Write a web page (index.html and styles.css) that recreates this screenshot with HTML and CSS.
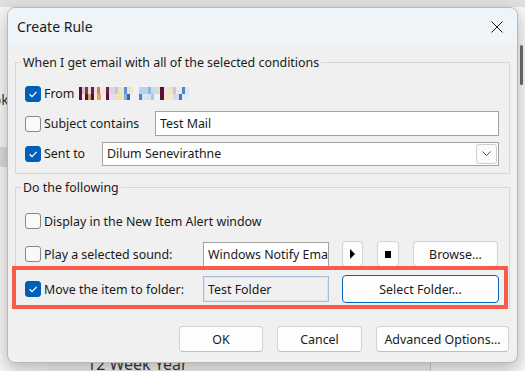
FILE: index.html
```html
<!DOCTYPE html>
<html lang="en">
<head>
    <meta charset="UTF-8">
    <meta name="viewport" content="width=device-width, initial-scale=1.0">
    <title>Create Rule</title>
    <link rel="stylesheet" href="styles.css">
</head>
<body>

    <div class="desktop">
        <div class="topbar"></div>
        <div class="workspace">
            <div class="nav">
                <div class="nav-item">Outlook</div>
                <div class="nav-item selected"></div>
            </div>
            <div class="list">
                <div class="list-item">12 Week Year</div>
            </div>
            <div class="reading">
                <div class="scroll-mark"></div>
            </div>
        </div>

        <div class="dialog">
            <div class="titlebar">
                <span class="title">Create Rule</span>
                <svg class="close" viewBox="0 0 12 12">
                    <path d="M0.5 0.5 L11.5 11.5 M11.5 0.5 L0.5 11.5" />
                </svg>
            </div>

            <div class="dialog-body">
                <fieldset class="group group-conditions">
                    <legend>When I get email with all of the selected conditions</legend>

                    <div class="row">
                        <label class="check">
                            <span class="box on"><svg viewBox="0 0 10 10"><path d="M2.2 5.2 L4.2 7.2 L8 3.2" /></svg></span>
                            From
                        </label>
                        <span class="blur"></span>
                    </div>

                    <div class="row">
                        <label class="check check-subject">
                            <span class="box"></span>
                            Subject contains
                        </label>
                        <div class="field field-grow">Test Mail</div>
                    </div>

                    <div class="row">
                        <label class="check check-sent">
                            <span class="box on"><svg viewBox="0 0 10 10"><path d="M2.2 5.2 L4.2 7.2 L8 3.2" /></svg></span>
                            Sent to
                        </label>
                        <div class="field field-grow combo">
                            <span>Dilum Senevirathne</span>
                            <span class="drop"><svg viewBox="0 0 9 5"><path d="M0.5 0.5 L4.5 4.5 L8.5 0.5" /></svg></span>
                        </div>
                    </div>
                </fieldset>

                <fieldset class="group group-actions">
                    <legend>Do the following</legend>

                    <div class="row">
                        <label class="check">
                            <span class="box"></span>
                            Display in the New Item Alert window
                        </label>
                    </div>

                    <div class="row">
                        <label class="check check-wide">
                            <span class="box"></span>
                            Play a selected sound:
                        </label>
                        <div class="field field-short">Windows Notify Email</div>
                        <button class="btn btn-play"><span class="tri"></span></button>
                        <button class="btn btn-stop"><span class="sq"></span></button>
                        <button class="btn btn-browse">Browse...</button>
                    </div>

                    <div class="row row-move">
                        <label class="check check-wide">
                            <span class="box on"><svg viewBox="0 0 10 10"><path d="M2.2 5.2 L4.2 7.2 L8 3.2" /></svg></span>
                            Move the item to folder:
                        </label>
                        <div class="field field-short field-folder">Test Folder</div>
                        <button class="btn btn-primary">Select Folder...</button>
                    </div>
                </fieldset>

                <div class="footer">
                    <button class="btn btn-ok">OK</button>
                    <button class="btn btn-cancel">Cancel</button>
                    <button class="btn btn-advanced">Advanced Options...</button>
                </div>
            </div>

            <div class="highlight"></div>
        </div>
    </div>

</body>
</html>
```

FILE: styles.css
```css
* {
    box-sizing: border-box;
}

body {
    margin: 0;
    width: 525px;
    height: 371px;
    overflow: hidden;
    font-family: 'Noto Sans', 'Segoe UI', sans-serif;
    color: #1a1a1a;
    background: #e9e9e9;
}

.desktop {
    position: relative;
    width: 525px;
    height: 371px;
    display: flex;
    flex-direction: column;
}

.topbar {
    height: 7px;
    background: #e1e1e1;
}

.workspace {
    flex: 1;
    display: flex;
}

.nav {
    width: 47px;
    background: #f7f7f7;
    padding-top: 84px;
    display: flex;
    flex-direction: column;
}

.nav-item {
    font-size: 14px;
    line-height: 18px;
    margin-left: -44px;
    color: #333;
}

.nav-item.selected {
    margin: 38px 0 0;
    height: 20px;
    background: #dadada;
}

.list {
    flex: 1;
    background: #f3f3f3;
    display: flex;
    flex-direction: column;
    justify-content: flex-end;
}

.list-item {
    font-size: 16px;
    line-height: 18px;
    padding-left: 40px;
    margin-bottom: -2px;
    color: #3a3a3a;
}

.reading {
    width: 95px;
    border-left: 1px solid #cfcfcf;
    background: #f8f8f8;
    display: flex;
    justify-content: flex-end;
}

.scroll-mark {
    width: 3px;
    height: 40px;
    margin: 38px 2px 0 0;
    background: #6b6b6b;
    border-radius: 2px;
}

/* dialog window */

.dialog {
    position: absolute;
    left: 7px;
    top: 7px;
    width: 511px;
    height: 356px;
    background: #f0f0f0;
    border: 1px solid #b8b8b8;
    border-radius: 8px;
    box-shadow: 0px 6px 18px rgba(0, 0, 0, 0.28);
    overflow: hidden;
}

.titlebar {
    height: 37px;
    background: #eef4f7;
    display: flex;
    align-items: center;
    justify-content: space-between;
    padding: 0 14px 0 9px;
}

.title {
    font-size: 14px;
}

.close {
    width: 12px;
    height: 12px;
    fill: none;
    stroke: #1a1a1a;
    stroke-width: 1;
}

.dialog-body {
    padding: 0 7px;
    font-size: 12.4px;
}

.group {
    margin: 9px 0 0;
    padding: 10px 10px 7px 9px;
    border: 1px solid #d6d6d6;
    min-width: 0;
}

.group-actions {
    margin-top: 5px;
    padding-top: 12px;
    padding-bottom: 5px;
}

legend {
    padding: 0 2px;
    margin-left: -4px;
    line-height: 17px;
}

.row {
    display: flex;
    align-items: center;
    height: 25px;
}

.row + .row {
    margin-top: 5px;
}

.group-actions .row {
    height: 26px;
    margin-top: 7px;
}

.group-actions .row:first-of-type {
    margin-top: 0;
}

.group-actions .row-move {
    height: 28px;
    margin-top: 8px;
}

.check {
    display: flex;
    align-items: center;
    flex: none;
}

.check-subject {
    width: 130px;
}

.check-sent {
    width: 77px;
}

.check-wide {
    width: 178px;
}

.box {
    width: 16px;
    height: 16px;
    margin-right: 3px;
    border: 1px solid #878787;
    border-radius: 3px;
    background: #f9f9f9;
    display: flex;
    align-items: center;
    justify-content: center;
}

.box.on {
    background: #005fb8;
    border-color: #005fb8;
}

.box svg {
    width: 12px;
    height: 12px;
    fill: none;
    stroke: #fff;
    stroke-width: 1.1;
}

.blur {
    width: 113px;
    height: 13px;
    margin-left: 5px;
    background:
        linear-gradient(90deg, #5a0f38 0 3px, #d9c2cf 3px 6px, #7b3a5a 6px 9px, #e9dbe3 9px 12px, #6a1d45 12px 15px, #eadfe6 15px 18px, #c98a4a 18px 21px, #efe6ea 21px 27px, #6a1d45 27px 30px, #e2d2dc 30px 36px, #b9c9e2 36px 39px, #f2e2b0 39px 42px, #dce6f2 42px 45px, #5f8fd0 45px 48px, #d8e6f2 48px 51px, #f3e7b3 51px 54px, #eef2f6 54px 60px, #b7d3ea 60px 69px, #8cb5dc 69px 72px, #c7dcee 72px 78px, #dae6b8 78px 81px, #5a0f38 81px 85px, #ece2e8 85px 88px, #f1e6b5 88px 94px, #c6c7e0 94px 97px, #e6ebf2 97px 103px, #4c86cc 103px 106px, #dfe8f2 106px 110px, transparent 110px) top / 100% 7px no-repeat,
        linear-gradient(90deg, #5a0f38 0 3px, #efe3ea 3px 6px, #5a0f38 6px 9px, #d7a05c 9px 12px, #5a0f38 12px 15px, #f1e7ec 15px 18px, #e3a35b 18px 22px, #f4eee8 22px 27px, #5a0f38 27px 30px, #e8dde4 30px 39px, #f0e3a3 39px 45px, #7fb2e0 45px 48px, #2f66b8 48px 51px, #eef2f6 51px 60px, #5a7fb8 60px 63px, #d5e4f1 63px 72px, #a6c9e8 72px 75px, #eef2f6 75px 81px, #5a0f38 81px 85px, #f1e9c9 85px 94px, #d8d9ea 94px 100px, #3c78c8 100px 103px, #e6ecf4 103px 110px, transparent 110px) bottom / 100% 6px no-repeat;
}

.field {
    height: 25px;
    background: #fff;
    border: 1px solid #a3a3a3;
    padding: 0 4px;
    display: flex;
    align-items: center;
    overflow: hidden;
    white-space: nowrap;
}

.field-grow {
    flex: 1;
}

.combo {
    height: 24px;
    justify-content: space-between;
    padding-right: 1px;
}

.drop {
    width: 21px;
    height: 20px;
    border: 1px solid #cdcdcd;
    border-radius: 3px;
    background: #fbfbfb;
    display: flex;
    align-items: center;
    justify-content: center;
}

.drop svg {
    width: 9px;
    height: 5px;
    fill: none;
    stroke: #555;
    stroke-width: 1;
}

.field-short {
    width: 126px;
    flex: none;
}

.field-folder {
    height: 26px;
    background: #f0f0f0;
    border: 1px solid #a6bcd6;
    box-shadow: inset 0 0 0 1px #dce6f0;
}

.btn {
    height: 26px;
    padding: 0;
    font: inherit;
    color: #1a1a1a;
    background: #fdfdfd;
    border: 1px solid #d2d2d2;
    border-bottom-color: #bfbfbf;
    border-radius: 4px;
    display: flex;
    align-items: center;
    justify-content: center;
    flex: none;
}

.btn-play {
    width: 21px;
    margin-left: 13px;
}

.tri {
    width: 0;
    height: 0;
    border-top: 5px solid transparent;
    border-bottom: 5px solid transparent;
    border-left: 5px solid #000;
}

.btn-stop {
    width: 22px;
    margin-left: 14px;
}

.sq {
    width: 6px;
    height: 7px;
    background: #000;
}

.btn-browse {
    width: 85px;
    margin-left: 14px;
}

.btn-primary {
    width: 157px;
    height: 28px;
    margin-left: 13px;
    border: 1px solid #0067c0;
    background: #fefefe;
}

.footer {
    display: flex;
    justify-content: flex-end;
    gap: 14px;
    margin-top: 17px;
    padding-right: 1px;
}

.btn-ok {
    width: 84px;
}

.btn-cancel {
    width: 85px;
}

.btn-advanced {
    width: 133px;
}

.highlight {
    position: absolute;
    left: 4px;
    top: 258px;
    width: 496px;
    height: 43px;
    border: 4px solid #f85a4b;
}
```
